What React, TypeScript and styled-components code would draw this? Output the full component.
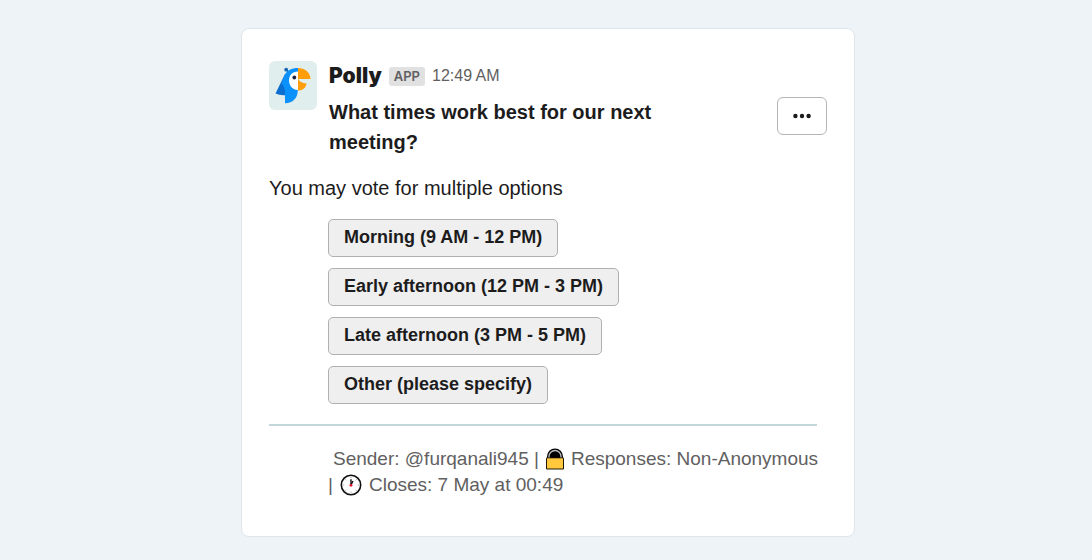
import React from "react";
import styled, { createGlobalStyle } from "styled-components";

const GlobalStyle = createGlobalStyle`
  *, *::before, *::after { box-sizing: border-box; }
  body {
    margin: 0;
    background: #edf3f7;
    color: #1d1c1d;
    font-family: "Liberation Sans", Arial, sans-serif;
    font-size: 20px;
    line-height: 30px;
  }
`;

const Page = styled.main`
  display: flex;
  justify-content: center;
  padding: 28px 20px 23px 24px;
`;

const Card = styled.article`
  width: 100%;
  max-width: 614px;
  padding: 32px 27px 38px;
  background: #ffffff;
  border: 1px solid #dfe6eb;
  border-radius: 8px;
`;

const Header = styled.header`
  display: flex;
  align-items: flex-start;
`;

const Avatar = styled.svg`
  flex: none;
  width: 48px;
  height: 49px;
  margin-right: 12px;
`;

const Heading = styled.div`
  flex: 1;
  min-width: 0;
`;

const Byline = styled.div`
  display: flex;
  align-items: center;
  gap: 7px;
  height: 30px;
  margin-bottom: 6px;
`;

const Name = styled.span`
  font-family: Inter, "Liberation Sans", sans-serif;
  font-size: 21px;
  font-weight: 900;
`;

const Tag = styled.span`
  padding: 0 5px;
  border-radius: 3px;
  background: #e1e1e1;
  color: #616061;
  font-family: Inter, "Liberation Sans", sans-serif;
  font-size: 13px;
  font-weight: 600;
  line-height: 19px;
`;

const Time = styled.time`
  color: #616061;
  font-size: 16px;
`;

const Question = styled.h1`
  max-width: 380px;
  margin: 0;
  font-size: 20px;
  font-weight: 700;
  line-height: 30px;
`;

const MoreButton = styled.button`
  display: flex;
  align-items: center;
  justify-content: center;
  width: 50px;
  height: 38px;
  margin-top: 36px;
  padding: 0;
  border: 1px solid #b5b5b5;
  border-radius: 6px;
  background: #ffffff;
  color: #1d1c1d;
`;

const Hint = styled.p`
  margin: 16px 0;
`;

const Options = styled.div`
  display: flex;
  flex-direction: column;
  align-items: flex-start;
  gap: 11px;
  margin-left: 59px;
`;

const OptionButton = styled.button`
  height: 38px;
  padding: 0 15px 2px;
  border: 1px solid #b0b0b0;
  border-radius: 5px;
  background: #efefef;
  color: #1d1c1d;
  font-family: inherit;
  font-size: 18px;
  font-weight: 700;
`;

const Divider = styled.hr`
  height: 2px;
  margin: 20px 10px 20px 0;
  border: 0;
  background: #c3d7db;
`;

const Meta = styled.footer`
  margin-left: 59px;
  color: #616061;
  font-size: 19px;
  line-height: 26px;
`;

const MetaLine = styled.div<{ $indent?: boolean }>`
  display: flex;
  align-items: center;
  gap: ${(p) => (p.$indent ? 5 : 7)}px;
  padding-left: ${(p) => (p.$indent ? 5 : 0)}px;
  white-space: nowrap;
`;

const MetaIcon = styled.svg`
  flex: none;
  width: 22px;
  height: 22px;
`;

const options = [
  "Morning (9 AM - 12 PM)",
  "Early afternoon (12 PM - 3 PM)",
  "Late afternoon (3 PM - 5 PM)",
  "Other (please specify)",
];

function PollyLogo() {
  return (
    <Avatar viewBox="0 0 48 49" role="img" aria-label="Polly">
      <rect width="48" height="49" rx="6" fill="#e0eeed" />
      <path d="M16 13 6.500 32.500q4 2 9.500 1.700L20 20Z" fill="#0b6fd0" />
      <path d="M17.500 9 20 11.500" stroke="#1467b8" strokeWidth="1.500" />
      <circle cx="17.200" cy="8.700" r="1.900" fill="#1467b8" />
      <path d="M29 7C22.500 7 18 9 15.500 14.500L12.500 22Q16 26 16 31V42.200C24 42.200 28.800 37 28.800 29Z" fill="#0a91fb" />
      <path d="M29 10.500C23 10.500 20 14.500 20 19.500S23.500 29 29 29Z" fill="#fff" />
      <path d="M29 7C36 7 41 11 41.500 18H29Z" fill="#ff9d0a" />
      <path d="M29 17.500Q31 22 37.500 22.500C37 27 33.500 29.500 29 29.500Z" fill="#ff9d0a" />
      <circle cx="25.300" cy="16.500" r="1.900" fill="#17213f" />
    </Avatar>
  );
}

function DotsIcon() {
  return (
    <svg width="18" height="6" viewBox="0 0 18 6" fill="currentColor" aria-hidden="true">
      <circle cx="2.400" cy="3" r="2.200" />
      <circle cx="9" cy="3" r="2.200" />
      <circle cx="15.600" cy="3" r="2.200" />
    </svg>
  );
}

function LockIcon() {
  return (
    <MetaIcon viewBox="0 0 22 22" aria-hidden="true">
      <path d="M3 12V8.500a8 8 0 0 1 16 0V12Z" fill="#000" />
      <path d="M5 10V8.500a6 6 0 0 1 12 0V10" fill="none" stroke="#b9bcc0" strokeWidth="1.300" />
      <rect x="2" y="9.500" width="18" height="12" rx="1" fill="#1c1708" />
      <rect x="3" y="10.300" width="16" height="10.200" fill="#ffc83d" />
    </MetaIcon>
  );
}

function ClockIcon() {
  return (
    <MetaIcon viewBox="0 0 22 22" aria-hidden="true">
      <circle cx="11" cy="11" r="9.700" fill="#fff" stroke="#111" strokeWidth="1.600" />
      <g stroke="#aaa" strokeWidth="0.900">
        <path d="M11 2.800v1.500M11 17.700v1.500M2.800 11h1.500M17.700 11h1.500M5.200 5.200l1 1M15.800 15.800l1 1M5.200 16.800l1-1M15.800 6.200l1-1" />
      </g>
      <path d="M11 11V5.200" stroke="#111" strokeWidth="1.400" />
      <path d="M11 11 13 7" stroke="#111" strokeWidth="1.400" />
      <circle cx="11" cy="11.300" r="1.400" fill="#e8112d" />
    </MetaIcon>
  );
}

export default function App() {
  return (
    <>
      <GlobalStyle />
      <Page>
        <Card>
          <Header>
            <PollyLogo />
            <Heading>
              <Byline>
                <Name>Polly</Name>
                <Tag>APP</Tag>
                <Time dateTime="00:49">12:49 AM</Time>
              </Byline>
              <Question>What times work best for our next meeting?</Question>
            </Heading>
            <MoreButton type="button" aria-label="More actions">
              <DotsIcon />
            </MoreButton>
          </Header>
          <Hint>You may vote for multiple options</Hint>
          <Options>
            {options.map((label) => (
              <OptionButton key={label} type="button">
                {label}
              </OptionButton>
            ))}
          </Options>
          <Divider />
          <Meta>
            <MetaLine $indent>
              <span>Sender: @furqanali945 |</span>
              <LockIcon />
              <span>Responses: Non-Anonymous</span>
            </MetaLine>
            <MetaLine>
              <span>|</span>
              <ClockIcon />
              <span>Closes: 7 May at 00:49</span>
            </MetaLine>
          </Meta>
        </Card>
      </Page>
    </>
  );
}
